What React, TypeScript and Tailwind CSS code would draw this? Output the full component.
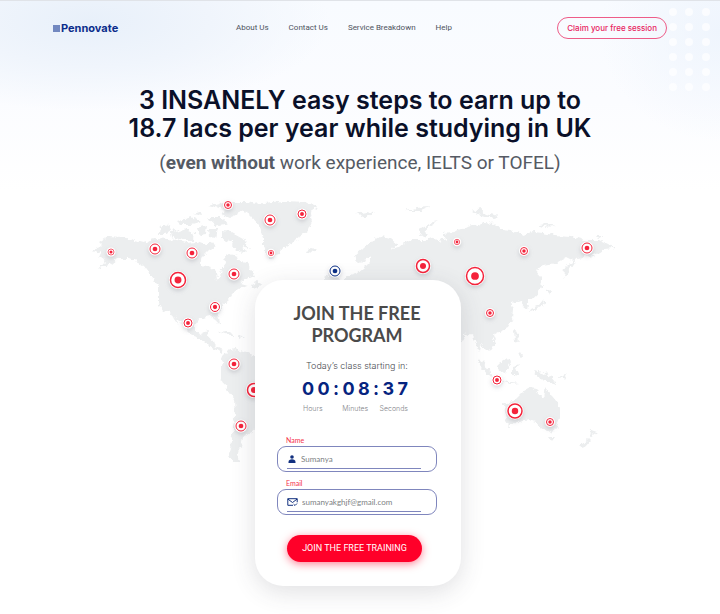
import { useState } from "react";

type Pin = { x: number; y: number; r: number; tone?: "blue" };

const pins: Pin[] = [
  { x: 228, y: 205, r: 4 },
  { x: 270, y: 220, r: 5.5 },
  { x: 302, y: 214, r: 4.5 },
  { x: 271, y: 253, r: 3.2 },
  { x: 111, y: 252, r: 3.5 },
  { x: 155, y: 249, r: 5.5 },
  { x: 192, y: 253, r: 5.5 },
  { x: 234, y: 274, r: 5.5 },
  { x: 178, y: 280, r: 8 },
  { x: 215, y: 307, r: 5 },
  { x: 188, y: 323, r: 4.5 },
  { x: 234, y: 364, r: 5.5 },
  { x: 254, y: 390, r: 7 },
  { x: 241, y: 426, r: 5.5 },
  { x: 335, y: 271, r: 5.5, tone: "blue" },
  { x: 423, y: 266, r: 7 },
  { x: 457, y: 242, r: 3.2 },
  { x: 475, y: 276, r: 9 },
  { x: 524, y: 251, r: 4 },
  { x: 587, y: 248, r: 5.5 },
  { x: 490, y: 313, r: 4 },
  { x: 497, y: 380, r: 4.5 },
  { x: 515, y: 411, r: 7.5 },
  { x: 550, y: 422, r: 4 },
];

const land = [
  // North and Central America
  "M99 242 L108 236 L123 237 L143 242 L157 238 L177 240 L186 243 L197 242 L205 245 L213 242 L216 247 L209 251 L201 259 L203 265 L210 267 L216 272 L217 280 L221 274 L222 268 L225 264 L224 256 L230 254 L238 256 L240 262 L247 263 L253 272 L255 276 L247 279 L240 283 L247 285 L238 289 L232 294 L229 300 L223 305 L217 312 L220 324 L217 322 L213 315 L205 317 L198 320 L195 324 L195 331 L200 334 L208 330 L207 337 L213 340 L215 346 L223 350 L221 353 L213 348 L204 341 L193 337 L187 331 L181 323 L175 315 L179 326 L176 322 L170 313 L163 310 L158 302 L158 288 L152 277 L144 266 L137 262 L128 258 L117 258 L110 264 L98 269 L105 261 L99 257 L102 251 L92 253 L96 248 L103 246 Z",
  // Arctic archipelago
  "M208 206 L222 202 L248 202 L258 205 L244 209 L238 214 L229 218 L222 215 L225 210 Z",
  "M222 231 L232 232 L243 238 L250 248 L242 246 L246 254 L236 250 L230 241 L222 238 Z",
  "M160 227 L168 223 L171 230 L165 234 L159 234 Z",
  "M171 232 L184 229 L194 233 L193 240 L182 240 L172 237 Z",
  "M177 221 L191 217 L202 222 L192 225 L181 225 Z M197 228 L207 225 L206 234 L199 235 Z M206 217 L220 217 L228 223 L216 226 Z M209 229 L218 229 L216 238 L210 237 Z M194 214 L202 211 L204 216 Z",
  // Caribbean
  "M219 332 L227 331 L234 335 L228 335 Z M236 335 L245 336 L240 339 Z M250 285 L258 281 L261 286 L253 289 Z",
  // South America
  "M223 356 L228 351 L234 349 L247 352 L256 356 L268 364 L280 378 L278 396 L268 415 L260 426 L252 433 L243 437 L241 447 L236 455 L241 462 L234 462 L229 456 L231 440 L235 417 L234 400 L227 390 L221 378 L221 366 Z",
  // Greenland
  "M240 209 L250 204 L263 203 L283 201 L307 202 L319 207 L310 213 L312 222 L308 231 L299 238 L290 243 L281 250 L274 259 L267 256 L263 247 L263 237 L259 225 L250 215 Z",
  // Iceland, British Isles and northern islands
  "M306 250 L311 248 L318 250 L313 253 L307 252 Z M326 280 L327 275 L333 268 L336 276 L341 282 L333 284 Z",
  "M356 214 L366 212 L374 213 L367 217 L362 216 Z M405 211 L416 208 L430 207 L421 211 Z M472 211 L480 209 L486 214 L499 217 L492 219 L481 216 Z M537 225 L548 224 L556 226 L543 227 Z M594 236 L603 236 L599 238 Z",
  "M419 237 L421 228 L429 223 L438 221 L428 227 L425 236 Z",
  // Europe and Asia
  "M342 284 L348 276 L356 274 L363 268 L369 262 L369 255 L364 262 L357 263 L355 255 L363 248 L371 241 L380 236 L390 239 L397 245 L392 249 L399 248 L405 243 L413 240 L425 240 L434 237 L438 241 L446 238 L443 233 L453 232 L462 229 L473 226 L483 222 L496 223 L501 229 L512 230 L523 235 L533 232 L543 233 L555 235 L571 236 L585 240 L600 240 L608 244 L615 248 L604 249 L596 254 L586 257 L577 258 L569 271 L564 278 L565 268 L573 260 L567 257 L556 263 L543 265 L536 271 L541 277 L542 287 L537 295 L529 299 L527 309 L523 306 L521 300 L511 302 L514 309 L513 319 L508 328 L499 332 L493 335 L496 343 L490 352 L486 348 L481 343 L480 352 L476 345 L472 336 L466 333 L459 345 L448 338 L420 330 L380 320 L348 310 Z",
  // Japan, Philippines and Indonesia
  "M545 291 L551 290 L549 295 Z M543 299 L545 304 L537 308 L529 312 L531 308 L538 305 Z M514 331 L518 333 L519 343 L515 340 Z M518 353 L523 354 L520 358 Z",
  "M477 358 L483 362 L493 376 L488 375 L481 367 Z M495 379 L508 382 L522 383 L510 384 Z M498 364 L507 357 L511 361 L505 373 L499 371 Z M513 366 L521 364 L516 369 L519 376 L513 375 Z M533 370 L543 372 L551 377 L558 386 L550 382 L543 382 L537 375 Z M559 377 L567 373 L564 379 Z",
  // Australia, Tasmania and New Zealand
  "M503 405 L515 399 L523 391 L530 387 L536 388 L538 394 L544 397 L546 387 L552 396 L557 402 L560 409 L560 418 L555 430 L547 433 L540 427 L536 422 L530 420 L518 422 L508 427 L505 424 L507 417 Z M548 437 L554 437 L551 441 Z M591 430 L597 432 L590 437 Z M589 438 L591 440 L584 448 L580 446 Z",
];

function WorldMap() {
  return (
    <svg
      viewBox="0 190 720 300"
      className="w-full self-start [grid-area:1/1]"
      role="img"
      aria-label="World map of student locations"
    >
      <defs>
        <filter id="coast" x="0" y="0" width="100%" height="100%">
          <feTurbulence type="fractalNoise" baseFrequency="0.18" numOctaves="3" seed="4" />
          <feDisplacementMap in="SourceGraphic" scale="7" xChannelSelector="R" yChannelSelector="G" />
        </filter>
        <filter id="pinShadow" x="-50%" y="-50%" width="200%" height="220%">
          <feDropShadow dx="0" dy="2" stdDeviation="2" floodColor="#8a8f98" floodOpacity="0.35" />
        </filter>
      </defs>
      <g fill="#eceeef" filter="url(#coast)">
        {land.map((d) => (
          <path key={d} d={d} />
        ))}
      </g>
      {pins.map((p) => {
        const color = p.tone === "blue" ? "#0b2f86" : "#f4233b";
        return (
          <g key={`${p.x}-${p.y}`}>
            <circle cx={p.x} cy={p.y} r={p.r + 1} fill="#fff" filter="url(#pinShadow)" />
            <circle
              cx={p.x}
              cy={p.y}
              r={p.r - 0.5}
              fill="#fff"
              stroke={color}
              strokeWidth={p.r > 6 ? 1.5 : p.r > 3.5 ? 1 : 0.7}
            />
            <circle cx={p.x} cy={p.y} r={p.r * 0.43} fill={color} />
          </g>
        );
      })}
    </svg>
  );
}

function DotGrid() {
  return (
    <svg className="absolute right-0 top-0 h-24 w-14" viewBox="0 0 56 96" aria-hidden="true">
      {[11, 26, 41, 56, 71, 86].map((y) =>
        [9, 25, 42].map((x) => <circle key={`${x}-${y}`} cx={x} cy={y} r="4" fill="#fff" opacity="0.7" />)
      )}
    </svg>
  );
}

function PersonIcon() {
  return (
    <svg viewBox="0 0 10 10" className="h-[10px] w-[10px] shrink-0" fill="#12307f" aria-hidden="true">
      <circle cx="5" cy="3" r="1.800" />
      <path d="M1.500 9V8c0-1.800 1.500-2.700 3.500-2.700S8.500 6.200 8.500 8v1z" />
    </svg>
  );
}

function MailIcon() {
  return (
    <svg viewBox="0 0 11 10" className="h-[10px] w-[11px] shrink-0" fill="none" stroke="#12307f" aria-hidden="true">
      <path d="M6 8.300H.8V1.700h9.400v3.600M.8 2l4.700 3.500L10.200 2M6.600 7.200l1.400 1.300 2-2" />
    </svg>
  );
}

function Field(props: { id: string; label: string; type: string; placeholder: string; icon: React.ReactNode }) {
  return (
    <div>
      <label htmlFor={props.id} className="block pl-[9px] font-['Lato',sans-serif] text-[7px] leading-[10px] text-[#f5304a]">
        {props.label}
      </label>
      <div className="mt-px h-[26px] rounded-[9px] border border-[#7f86bd] px-[9px] pt-[3px]">
        <div className="mr-[6px] flex h-[19px] items-center gap-1 border-b border-[#7f86bd]">
          {props.icon}
          <input
            id={props.id}
            type={props.type}
            placeholder={props.placeholder}
            className="w-full min-w-0 bg-transparent font-['Lato',sans-serif] text-[8px] leading-[10px] text-gray-700 outline-none placeholder:text-[#7d7f83]"
          />
        </div>
      </div>
    </div>
  );
}

function Countdown() {
  const [digits] = useState(["0", "0", ":", "0", "8", ":", "3", "7"]);
  return (
    <div className="ml-[25px] w-[106px]">
      <div className="mt-1 flex justify-between text-[18px] font-bold leading-[26px] text-[#06247f]">
        {digits.map((d, i) => (
          <span key={i}>{d}</span>
        ))}
      </div>
      <div className="flex justify-between pl-px text-left text-[7px] font-light leading-[14px] text-[#85878c]">
        <span className="w-7">Hours</span>
        <span>Minutes</span>
        <span>Seconds</span>
      </div>
    </div>
  );
}

export default function App() {
  return (
    <div className="relative min-h-screen overflow-hidden border-t border-[#e0e3e8] bg-white bg-[radial-gradient(ellipse_240px_90px_at_90px_20px,#e8f0fa_0%,#f0f5fc_50%,transparent_100%),radial-gradient(ellipse_120px_110px_at_100%_30px,#eff5fd_0%,transparent_100%),linear-gradient(#f8fbff_0px,#fbfcff_100px,#ffffff_190px)] font-['Inter',sans-serif]">
      <DotGrid />
      <header className="relative flex items-center px-[53px] pt-4">
        <a href="#" className="flex w-[183px] items-center gap-px text-[11px] font-bold leading-4 text-[#0b2d8c]">
          <span className="h-[7px] w-[7px] bg-[#7288c0]" />
          Pennovate
        </a>
        <nav className="flex gap-5 whitespace-nowrap font-['Roboto',sans-serif] text-[8px] leading-4 text-[#4e535e]">
          <a href="#">About Us</a>
          <a href="#">Contact Us</a>
          <a href="#">Service Breakdown</a>
          <a href="#">Help</a>
        </nav>
        <button className="ml-auto h-[22px] whitespace-nowrap rounded-full border border-[#ee5c88] px-[9px] text-[8px] font-medium text-[#e8245f]">
          Claim your free session
        </button>
      </header>

      <section className="relative pt-[47px] text-center">
        <h1 className="text-[25px] font-semibold leading-7 text-[#0a1029]">
          3 INSANELY easy steps to earn up to
          <br />
          18.7 lacs per year while studying in UK
        </h1>
        <p className="mt-[9px] font-['Roboto',sans-serif] text-[19px] leading-6 text-[#555a64]">
          (<strong className="font-bold">even without</strong> work experience, IELTS or TOFEL)
        </p>
      </section>

      <main className="mt-[15px] grid justify-items-center">
        <WorldMap />
        <form
          onSubmit={(e) => e.preventDefault()}
          className="z-10 mb-7 mr-1 mt-[90px] w-[206px] rounded-[28px] bg-white pb-6 pl-[22px] pr-6 pt-[22px] text-center shadow-[0_6px_24px_rgba(60,65,75,0.16)] [grid-area:1/1]"
        >
          <h2 className="font-['Lato',sans-serif] text-[18px] font-bold leading-[22px] text-[#4a4a4a]">
            JOIN THE FREE
            <br />
            PROGRAM
          </h2>
          <p className="mt-[14px] text-[9px] font-light leading-3 text-[#4c4e53]">Today’s class starting in:</p>
          <Countdown />
          <div className="mt-[19px] flex flex-col gap-[6px] text-left">
            <Field id="name" label="Name" type="text" placeholder="Sumanya" icon={<PersonIcon />} />
            <Field id="email" label="Email" type="email" placeholder="sumanyakghjf@gmail.com" icon={<MailIcon />} />
          </div>
          <button className="ml-[10px] mt-5 block h-[27px] w-[135px] whitespace-nowrap rounded-full bg-[#ff0029] font-['Roboto',sans-serif] text-[9px] text-white shadow-[0_2px_9px_rgba(255,0,41,0.5)]">
            JOIN THE FREE TRAINING
          </button>
        </form>
      </main>
    </div>
  );
}
